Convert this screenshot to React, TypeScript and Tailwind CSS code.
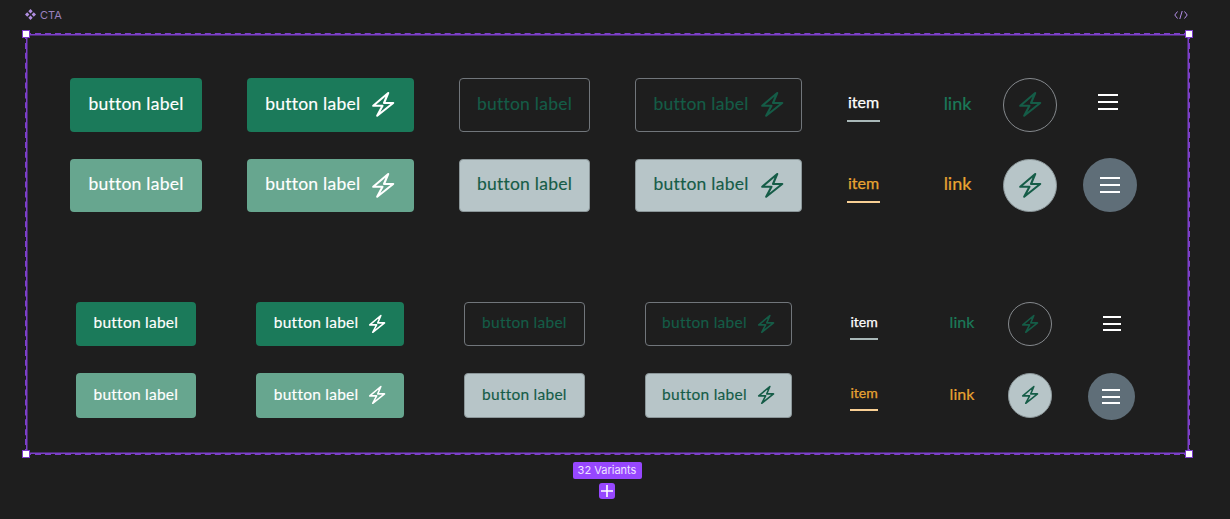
import type { ReactNode } from "react";

type Variant = "solid" | "soft" | "outline" | "muted";

const variantClass: Record<Variant, string> = {
  solid: "bg-[#1b7a5a] text-white",
  soft: "bg-[#67a68f] text-white",
  outline: "border border-[#71767b] text-[#155c47]",
  muted: "bg-[#b7c5c8] border border-[#8b9699] text-[#155c47]",
};

function Bolt({ className }: { className: string }) {
  return (
    <svg viewBox="0 1 24 27" fill="none" stroke="currentColor" strokeWidth="2.1" strokeLinejoin="round" className={className}>
      <path d="M17.2 3 2.2 15.7h9.3l-5.3 10 16-12.7H13z" />
    </svg>
  );
}

function Button({ variant, small, icon, className }: { variant: Variant; small?: boolean; icon?: boolean; className: string }) {
  return (
    <div className={`flex items-center justify-center rounded-[4px] ${variantClass[variant]} ${className}`}>
      <span className={`pb-[2px] [-webkit-text-stroke:0.15px] ${small ? "text-[15.5px] tracking-[0.25px]" : "text-[17.5px] tracking-[0.25px]"}`}>
        button label
      </span>
      {icon && <Bolt className={small ? "ml-[10px] h-[20px] w-[18px]" : "ml-[11px] h-[27px] w-[24px]"} />}
    </div>
  );
}

function Item({ amber, small, className }: { amber?: boolean; small?: boolean; className: string }) {
  return (
    <div className={`flex flex-col items-center pt-[5px] [-webkit-text-stroke:0.25px] ${amber ? "text-[#e8a432]" : "text-white"} ${className}`}>
      <span className={small ? "text-[14px] leading-[18px]" : "text-[16px] leading-[20px]"}>item</span>
      <span className={`h-[2px] w-full ${small ? "mt-[7px]" : "mt-[8px]"} ${amber ? "bg-[#f8cf94]" : "bg-[#a9b8b8]"}`} />
    </div>
  );
}

function Link({ amber, small, className }: { amber?: boolean; small?: boolean; className: string }) {
  return (
    <div className={`flex justify-center pb-[3px] [-webkit-text-stroke:0.2px] ${amber ? "text-[#e8a432]" : "text-[#1b7a5a]"} ${small ? "text-[16px]" : "text-[18px]"} ${className}`}>
      link
    </div>
  );
}

function Round({ filled, small, className }: { filled?: boolean; small?: boolean; className: string }) {
  return (
    <div
      className={`flex shrink-0 items-center justify-center rounded-full border text-[#155c47] ${
        filled ? "border-[#8b9699] bg-[#b7c5c8]" : "border-[#85898d]"
      } ${small ? "h-[44.5px] w-[44.5px]" : "h-[53.5px] w-[53.5px]"} ${className}`}
    >
      <Bolt className={small ? "h-[20px] w-[18px]" : "h-[27px] w-[24px]"} />
    </div>
  );
}

function Bars({ small }: { small?: boolean }) {
  return (
    <div className={`flex flex-col ${small ? "w-[18px] gap-[4.4px]" : "w-[20px] gap-[5px]"}`}>
      <span className="h-[2px] bg-white" />
      <span className="h-[2px] bg-white" />
      <span className="h-[2px] bg-white" />
    </div>
  );
}

function Row({ children, className }: { children: ReactNode; className: string }) {
  return <div className={`flex items-center ${className}`}>{children}</div>;
}

function Handle({ className }: { className: string }) {
  return <span className={`absolute h-[8px] w-[8px] border-[1.5px] border-[#7c3cc9] bg-white ${className}`} />;
}

export default function App() {
  return (
    <div className="h-[519px] w-[1230px] overflow-hidden bg-[#1e1e1e] font-['Lato',sans-serif]">
      <div className="ml-[25px] flex h-[32.5px] w-[1164px] items-center justify-between pb-[3px] font-['Inter',sans-serif] text-[11px]">
        <div className="flex items-center gap-[4px] text-[#9a80bd]">
          <svg viewBox="0 0 10 10" className="h-[11px] w-[11px] fill-[#b08ee0]">
            <path d="M5 0 7 2 5 4 3 2zM5 6 7 8 5 10 3 8zM2 3 4 5 2 7 0 5zM8 3 10 5 8 7 6 5z" />
          </svg>
          <span>CTA</span>
        </div>
        <svg viewBox="0 0 14 10" fill="none" stroke="#b48fe8" strokeWidth="1" className="mr-[1px] h-[10px] w-[14px]">
          <path d="M3.5 1.5 0.8 5l2.7 3.5M10.5 1.5 13.2 5l-2.7 3.5M8.2 1 5.8 9" />
        </svg>
      </div>

      <div className="relative ml-[24.5px] h-[422.5px] w-[1165px] border-2 border-dashed border-[#7c3fc9] pt-[43.5px] pl-[43.5px] shadow-[inset_0_0_0_0.5px_#7c3fc9] outline outline-1 -outline-offset-2 outline-[#7c3fc9]">
        <Handle className="-top-[5px] -left-[5px]" />
        <Handle className="-top-[5px] -right-[5px]" />
        <Handle className="-bottom-[5px] -left-[5px]" />
        <Handle className="-right-[5px] -bottom-[5px]" />

        <Row className="h-[53.5px]">
          <Button variant="solid" className="h-full w-[132px]" />
          <Button variant="solid" icon className="ml-[44.5px] h-full w-[167.5px]" />
          <Button variant="outline" className="ml-[45px] h-full w-[131px]" />
          <Button variant="outline" icon className="ml-[45px] h-full w-[167px]" />
          <Item className="ml-[45px] w-[33px]" />
          <Link className="ml-[64px] w-[27px]" />
          <Round className="ml-[32px]" />
          <div className="mb-[5px] ml-[41px]">
            <Bars />
          </div>
        </Row>

        <Row className="mt-[27px] h-[53.5px]">
          <Button variant="soft" className="h-full w-[132px]" />
          <Button variant="soft" icon className="ml-[44.5px] h-full w-[167.5px]" />
          <Button variant="muted" className="ml-[45px] h-full w-[131px]" />
          <Button variant="muted" icon className="ml-[45px] h-full w-[167px]" />
          <Item amber className="ml-[45px] w-[33px]" />
          <Link amber className="ml-[64px] w-[27px]" />
          <Round filled className="ml-[32px]" />
          <div className="ml-[26.5px] flex h-[54px] w-[54px] items-center justify-center rounded-full bg-[#5f6e78]">
            <Bars />
          </div>
        </Row>

        <Row className="mt-[89.5px] h-[44.5px] pl-[5.7px]">
          <Button small variant="solid" className="h-full w-[120.3px]" />
          <Button small variant="solid" icon className="ml-[60.3px] h-full w-[147.7px]" />
          <Button small variant="outline" className="ml-[60.3px] h-full w-[120.3px]" />
          <Button small variant="outline" icon className="ml-[60.4px] h-full w-[147px]" />
          <Item small className="ml-[58px] w-[28.3px]" />
          <Link small className="ml-[71.7px] w-[24px]" />
          <Round small className="ml-[33.7px]" />
          <div className="ml-[50.5px]">
            <Bars small />
          </div>
        </Row>

        <Row className="mt-[27px] h-[44.5px] items-start pl-[5.7px]">
          <Button small variant="soft" className="h-full w-[120.3px]" />
          <Button small variant="soft" icon className="ml-[60.3px] h-full w-[147.7px]" />
          <Button small variant="muted" className="ml-[60.3px] h-full w-[120.3px]" />
          <Button small variant="muted" icon className="ml-[60.4px] h-full w-[147px]" />
          <Item small amber className="ml-[58px] w-[28.3px] self-center" />
          <Link small amber className="ml-[71.7px] w-[24px] self-center" />
          <Round small filled className="ml-[33.7px]" />
          <div className="ml-[35.8px] flex h-[47px] w-[47px] items-center justify-center rounded-full bg-[#5f6e78]">
            <Bars small />
          </div>
        </Row>
      </div>

      <div className="ml-[25px] flex w-[1164px] flex-col items-center font-['Inter',sans-serif]">
        <div className="mt-[6.5px] flex h-[17.5px] w-[69px] items-center justify-center rounded-[2px] bg-[#9747ff] text-[11px] text-[#efe3ff]">
          32 Variants
        </div>
        <div className="mt-[4px] flex h-[16px] w-[16px] items-center justify-center rounded-[3px] bg-[#9747ff]">
          <svg viewBox="0 0 12 12" stroke="white" strokeWidth="1.6" className="h-[12px] w-[12px]">
            <path d="M6 0v12M0 6h12" />
          </svg>
        </div>
      </div>
    </div>
  );
}
